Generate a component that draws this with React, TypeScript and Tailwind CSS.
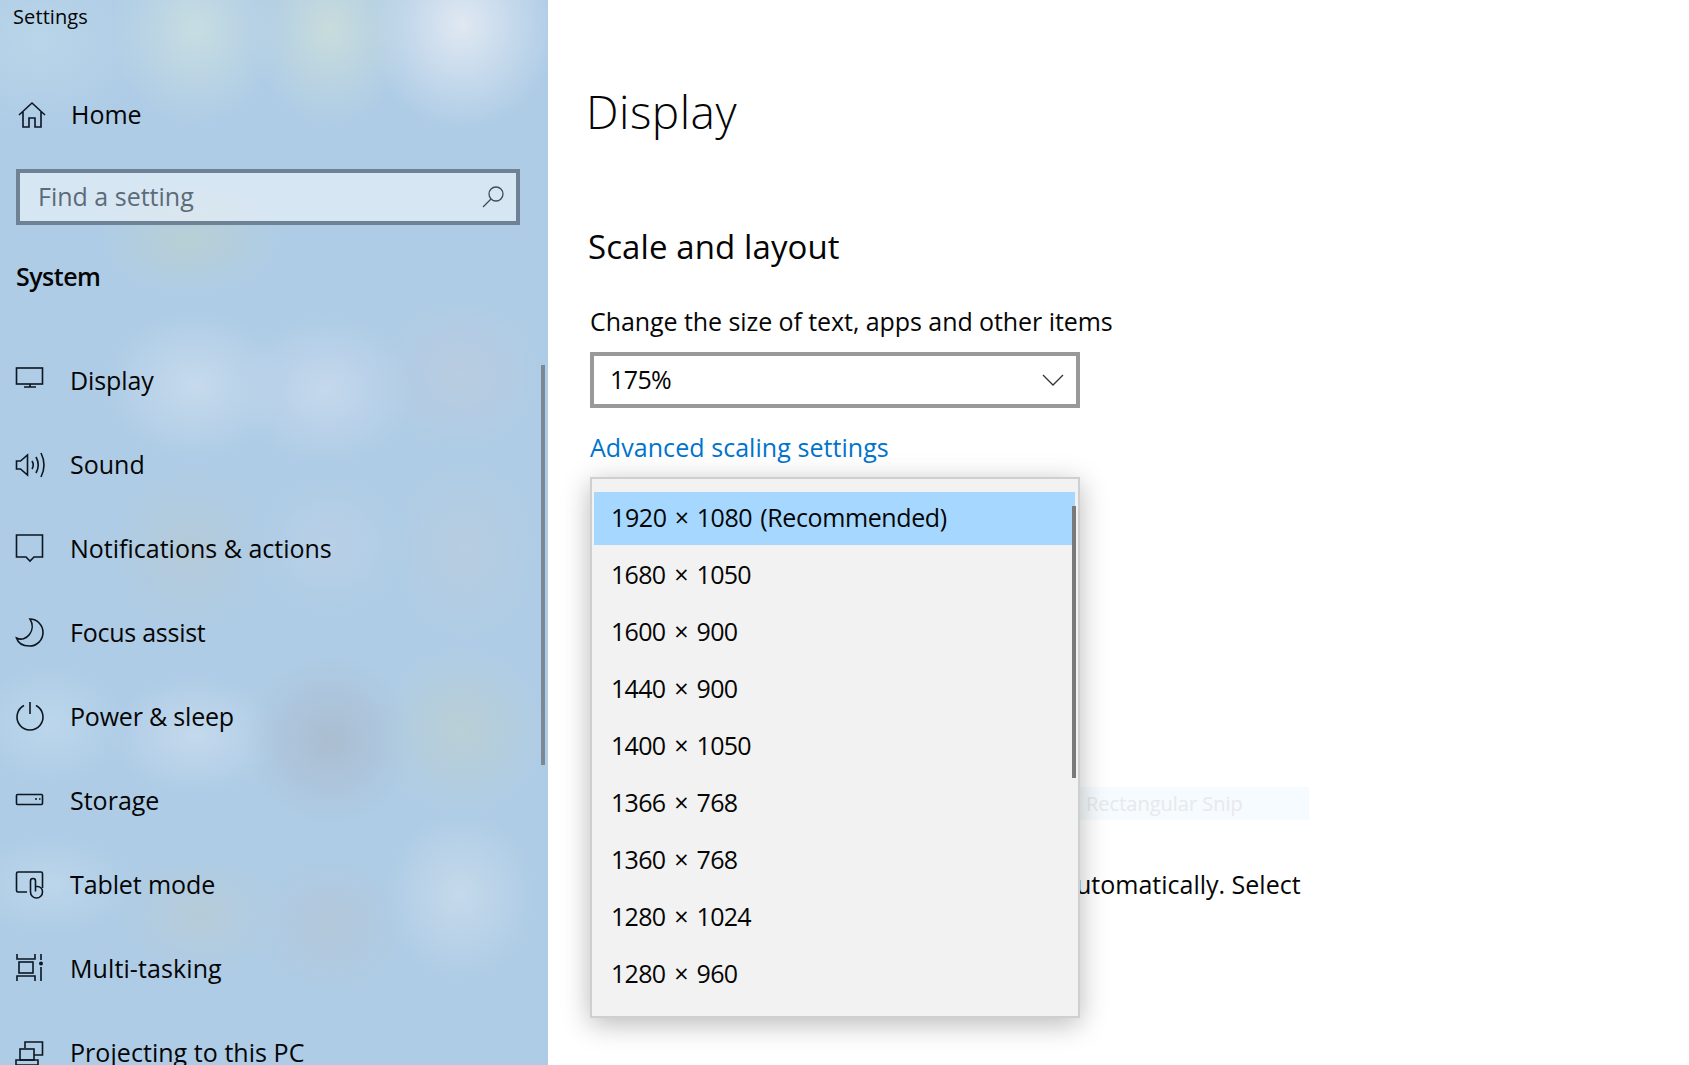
const Ico = ({ children }: { children: React.ReactNode }) => (
  <svg width="30" height="30" viewBox="0 0 30 30" fill="none" stroke="#0c1620" strokeWidth="1.6" className="shrink-0">
    {children}
  </svg>
);

const icons: Record<string, React.ReactNode> = {
  home: <path d="M2 15 15 3l13 12M6 12v15h6v-9h6v9h6V12" />,
  display: <><rect x="1.500" y="2" width="26" height="16" /><path d="M15 18v3M9 21h12" /></>,
  sound: <path d="M1.500 11v8h4l7 6V5l-7 6zM17 11q2.500 4 0 8M21 7q4.500 8 0 16M26 3q6 12 0 24" />,
  notif: <path d="M1.500 1h26v22H19l-4 4-4-4H1.500z" />,
  focus: <path d="M15 1c7 0 13 6 13 13.500s-6 13.500-13.500 13.500C8 28 3 25 1.500 20 11 25 22 12 15 1z" />,
  power: <><path d="M9 3.500a13 13 0 1 0 12 0" /><path d="M15 0v12" /></>,
  storage: <><rect x="1.500" y="8.500" width="26" height="10" rx="1" /><path d="M20 13h2M24 13h1.500" /></>,
  tablet: <><path d="M12 22H3a1.500 1.500 0 0 1-1.500-1.500V3.500A1.500 1.500 0 0 1 3 2h23a1.500 1.500 0 0 1 1.500 1.500V18" /><path d="M15.500 22V11a2.500 2.500 0 0 1 5 0v5.500h2a5 5 0 0 1 5 5v.5a6 6 0 0 1-12 0M20.500 16.500v5" /></>,
  multi: <><path d="M2 0v5h18V0M2 27v-5h18v5" /><rect x="4" y="8" width="14" height="11" /><path d="M26 0v6M26 13v14" /><circle cx="26" cy="9.500" r="2" fill="#0c1620" stroke="none" /></>,
  project: <><path d="M10 10V4h17.500v13H19" /><rect x="5" y="11" width="14" height="11" /><path d="M1 27h22v-5H1z" /></>,
};

const items = [
  ["Display", "display", "tracking-[-0.1px]"],
  ["Sound", "sound", "tracking-[0px]"],
  ["Notifications & actions", "notif", "tracking-[0px]"],
  ["Focus assist", "focus", "tracking-[-0.25px]"],
  ["Power & sleep", "power", "tracking-[-0.2px]"],
  ["Storage", "storage", "tracking-[0px]"],
  ["Tablet mode", "tablet", "tracking-[-0.1px]"],
  ["Multi-tasking", "multi", "tracking-[0.1px]"],
  ["Projecting to this PC", "project", "tracking-[0.05px]"],
];

const resolutions = [
  "1680 × 1050",
  "1600 × 900",
  "1440 × 900",
  "1400 × 1050",
  "1366 × 768",
  "1360 × 768",
  "1280 × 1024",
  "1280 × 960",
];

export default function App() {
  return (
    <div className="relative flex h-[1065px] w-full overflow-hidden bg-white font-['Open_Sans','Noto_Sans',sans-serif] text-[#050505]">
      <aside className="relative w-[548px] shrink-0 overflow-hidden bg-[#aecce6] bg-[radial-gradient(ellipse_85px_95px_at_195px_30px,#c8dde2,transparent),radial-gradient(ellipse_80px_95px_at_330px_30px,#c8dcdc,transparent),radial-gradient(ellipse_95px_105px_at_462px_25px,#e0e8f2,transparent),radial-gradient(ellipse_90px_55px_at_190px_240px,#b8cfd4,transparent),radial-gradient(ellipse_110px_90px_at_40px_40px,#b9d5e9,transparent),radial-gradient(ellipse_90px_75px_at_195px_385px,#c6daec,transparent),radial-gradient(ellipse_90px_75px_at_325px_390px,#c5d8ec,transparent),radial-gradient(ellipse_85px_80px_at_460px_375px,#b9cce0,transparent),radial-gradient(ellipse_75px_95px_at_465px_550px,#b7cde0,transparent),radial-gradient(ellipse_80px_85px_at_190px_550px,#b4cad8,transparent),radial-gradient(ellipse_75px_70px_at_330px_545px,#b9d0e6,transparent),radial-gradient(ellipse_85px_85px_at_330px_740px,#abbdd0,transparent),radial-gradient(ellipse_85px_85px_at_462px_730px,#bacfd5,transparent),radial-gradient(ellipse_85px_60px_at_195px_735px,#c4d9ec,transparent),radial-gradient(ellipse_75px_60px_at_50px_725px,#bcd7ec,transparent),radial-gradient(ellipse_75px_85px_at_460px_895px,#c5d9ea,transparent),radial-gradient(ellipse_85px_60px_at_200px_915px,#b6cbd8,transparent),radial-gradient(ellipse_75px_70px_at_330px_925px,#b3c7d9,transparent),radial-gradient(ellipse_85px_50px_at_50px_885px,#bcd6ea,transparent)]">
        <div className="flex h-[33px] items-center pl-[13px] text-[20px] tracking-[0.1px]">Settings</div>
        <div className="mt-[40px] flex h-[84px] items-center pl-[17px]">
          <Ico>{icons.home}</Ico>
          <span className="ml-[24px] text-[25px]">Home</span>
        </div>
        <div className="ml-[16px] mt-[12px] flex h-[56px] w-[504px] items-center justify-between border-4 border-[#6f8194] bg-[#ffffff]/50 pl-[18px] pr-[11px]">
          <span className="text-[25px] text-[#5c6b78]">Find a setting</span>
          <svg width="24" height="24" viewBox="0 0 24 24" fill="none" stroke="#3f4c58" strokeWidth="1.300">
            <circle cx="15" cy="9" r="7" />
            <path d="M10 14 2 22" />
          </svg>
        </div>
        <div className="ml-[16px] mt-[37px] text-[25px] font-semibold leading-[28px] tracking-[-0.5px]">System</div>
        <nav className="mt-[49px]">
          {items.map(([label, icon, track]) => (
            <div key={label} className="flex h-[84px] items-center pl-[15px]">
              <Ico>{icons[icon]}</Ico>
              <span className={`ml-[25px] text-[25px] ${track}`}>{label}</span>
            </div>
          ))}
        </nav>
        <div className="absolute left-[541px] top-[365px] h-[400px] w-[4px] bg-[#7c8894]" />
      </aside>

      <main className="min-w-0 flex-1 pl-[42px]">
        <h1 className="-ml-[4px] mt-[79px] text-[46px] font-light leading-[64px] tracking-[0.5px]">Display</h1>
        <h2 className="-ml-[2px] mt-[81px] text-[33px] leading-[46px] tracking-[0.1px]">Scale and layout</h2>
        <p className="mt-[34px] text-[25px] leading-[34px] tracking-[-0.07px]">Change the size of text, apps and other items</p>
        <div className="mt-[14px] flex h-[56px] w-[490px] items-center justify-between border-4 border-[#999999] pl-[16px] pr-[12px]">
          <span className="text-[25px] tracking-[-0.6px]">175%</span>
          <svg width="22" height="12" viewBox="0 0 22 12" fill="none" stroke="#333333" strokeWidth="1.300">
            <path d="M1 1l10 10L21 1" />
          </svg>
        </div>
        <a className="mt-[22px] block text-[25px] leading-[34px] tracking-[0.06px] text-[#0074cc]">Advanced scaling settings</a>
        <p className="ml-[486px] mt-[403px] whitespace-nowrap text-[25px] leading-[34px]">utomatically. Select</p>
      </main>

      <div className="absolute left-[1045px] top-[787px] flex h-[33px] w-[264px] items-center bg-[#f5fbfe] pl-[41px] text-[20px] text-[#e7e9ec]">
        Rectangular Snip
      </div>

      <div className="absolute left-[590px] top-[477px] h-[541px] w-[490px] border-2 border-[#cfcfcf] bg-[#f2f2f2] pl-[2px] pr-[3px] pt-[13px] shadow-[0_6px_26px_rgba(0,0,0,0.28)]">
        <div className="mb-[1px] flex h-[53px] items-center bg-[#a6d8ff] pb-[1px] pl-[17px] text-[25px] tracking-[-0.4px] [word-spacing:2px]">
          1920 × 1080 (Recommended)
        </div>
        {resolutions.map((r) => (
          <div key={r} className="flex h-[57px] items-center pl-[17px] text-[25px] tracking-[-0.7px] [word-spacing:3px]">
            {r}
          </div>
        ))}
        <div className="absolute right-[2px] top-[27px] h-[272px] w-[4px] bg-[#7a7a7a]" />
      </div>
    </div>
  );
}
